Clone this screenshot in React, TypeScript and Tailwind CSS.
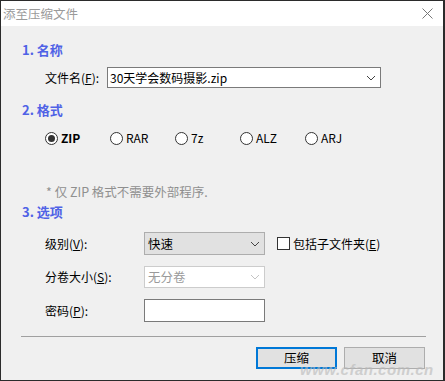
import React from "react";

const font = { fontFamily: '"Noto Sans CJK SC", "Noto Sans", sans-serif' };

function Chevron({ color = "#444" }: { color?: string }) {
  return (
    <svg width="10" height="6" viewBox="0 0 10 6" className="shrink-0">
      <path d="M1 1 L5 5 L9 1" fill="none" stroke={color} strokeWidth="1" />
    </svg>
  );
}

function Radio({ label, checked, bold }: { label: string; checked?: boolean; bold?: boolean }) {
  return (
    <div className="flex items-center w-[65px] h-[16px]">
      <div className="w-[13px] h-[13px] rounded-full border border-[#333] bg-white flex items-center justify-center shrink-0">
        {checked && <div className="w-[7px] h-[7px] rounded-full bg-[#333]" />}
      </div>
      <span className={"ml-[3px] text-[12px] leading-[16px] text-black " + (bold ? "font-bold" : "")}>{label}</span>
    </div>
  );
}

function Heading({ children }: { children: React.ReactNode }) {
  return <div className="pl-[21px] h-[16px] text-[13px] leading-[16px] font-bold text-[#4f62e6]">{children}</div>;
}

export default function App() {
  return (
    <div className="w-[445px] h-[381px] relative bg-[#2b2b2b] pt-[1px] pl-[1px] pr-[2px] pb-[1px]" style={font}>
      <div className="w-full h-full bg-[#f0f0f0] flex flex-col">
        {/* title bar */}
        <div className="h-[25px] bg-white flex items-center justify-between pl-[2px] pr-[10px] shrink-0">
          <span className="text-[12.5px] text-[#9a9a9a] leading-[16px]">添至压缩文件</span>
          <svg width="11" height="11" viewBox="0 0 11 11">
            <path d="M0.5 0.5 L10.5 10.5 M10.5 0.5 L0.5 10.5" stroke="#777" strokeWidth="1" />
          </svg>
        </div>

        <div className="mt-[16px]">
          <Heading>1. 名称</Heading>
        </div>

        <div className="mt-[9px] flex items-center pl-[44px] h-[21px]">
          <span className="w-[62px] text-[12px] leading-[16px] text-black">
            文件名(<span className="underline">F</span>):
          </span>
          <div className="w-[274px] h-[21px] bg-white border border-[#7a7a7a] flex items-center justify-between pl-[2px] pr-[4px]">
            <span className="text-[12px] leading-[16px] text-black">30天学会数码摄影.zip</span>
            <Chevron />
          </div>
        </div>

        <div className="mt-[14px]">
          <Heading>2. 格式</Heading>
        </div>

        <div className="mt-[12px] flex items-center pl-[44px]">
          <Radio label="ZIP" checked bold />
          <Radio label="RAR" />
          <Radio label="7z" />
          <Radio label="ALZ" />
          <Radio label="ARJ" />
        </div>

        <div className="mt-[38px] pl-[45px] h-[16px] text-[12.5px] leading-[16px] text-[#8f8f8f]">
          * 仅 ZIP 格式不需要外部程序.
        </div>

        <div className="mt-[4px]">
          <Heading>3. 选项</Heading>
        </div>

        <div className="mt-[12px] flex items-center pl-[44px] h-[23px]">
          <span className="w-[99px] text-[12px] leading-[16px] text-black">
            级别(<span className="underline">V</span>):
          </span>
          <div className="w-[121px] h-[23px] bg-[#e1e1e1] border border-[#adadad] flex items-center justify-between pl-[3px] pr-[4px]">
            <span className="text-[12.5px] leading-[16px] text-black">快速</span>
            <Chevron />
          </div>
          <div className="ml-[12px] w-[13px] h-[13px] border border-[#333] bg-white" />
          <span className="ml-[3px] text-[12px] leading-[16px] text-black">
            包括子文件夹(<span className="underline">E</span>)
          </span>
        </div>

        <div className="mt-[11px] flex items-center pl-[44px] h-[22px]">
          <span className="w-[99px] text-[12px] leading-[16px] text-black">
            分卷大小(<span className="underline">S</span>):
          </span>
          <div className="w-[121px] h-[22px] bg-white border border-[#cccccc] flex items-center justify-between pl-[3px] pr-[4px]">
            <span className="text-[12.5px] leading-[16px] text-[#9a9a9a]">无分卷</span>
            <Chevron color="#c4c4c4" />
          </div>
        </div>

        <div className="mt-[11px] flex items-center pl-[44px] h-[23px]">
          <span className="w-[99px] text-[12px] leading-[16px] text-black">
            密码(<span className="underline">P</span>):
          </span>
          <div className="w-[121px] h-[23px] bg-white border border-[#7a7a7a]" />
        </div>

        <div className="mt-[14px] ml-[20px] mr-[17px] h-[1px] bg-[#a0a0a0]" />

        <div className="mt-[10px] flex justify-end pr-[18px] gap-[7px]">
          <div className="w-[81px] h-[22px] bg-[#e1e1e1] border-2 border-[#0078d7] flex items-center justify-center text-[12.5px] text-black">
            压缩
          </div>
          <div className="w-[81px] h-[22px] bg-[#e1e1e1] border border-[#adadad] flex items-center justify-center text-[12.5px] text-black">
            取消
          </div>
        </div>
      </div>

      {/* watermark */}
      <div className="absolute left-[300px] top-[359px] text-[15px] italic font-bold text-[#b8b8b8] opacity-60 tracking-[0.5px] pointer-events-none" style={{ fontFamily: '"Liberation Sans", sans-serif' }}>
        www.cfan.com.cn
      </div>
    </div>
  );
}
